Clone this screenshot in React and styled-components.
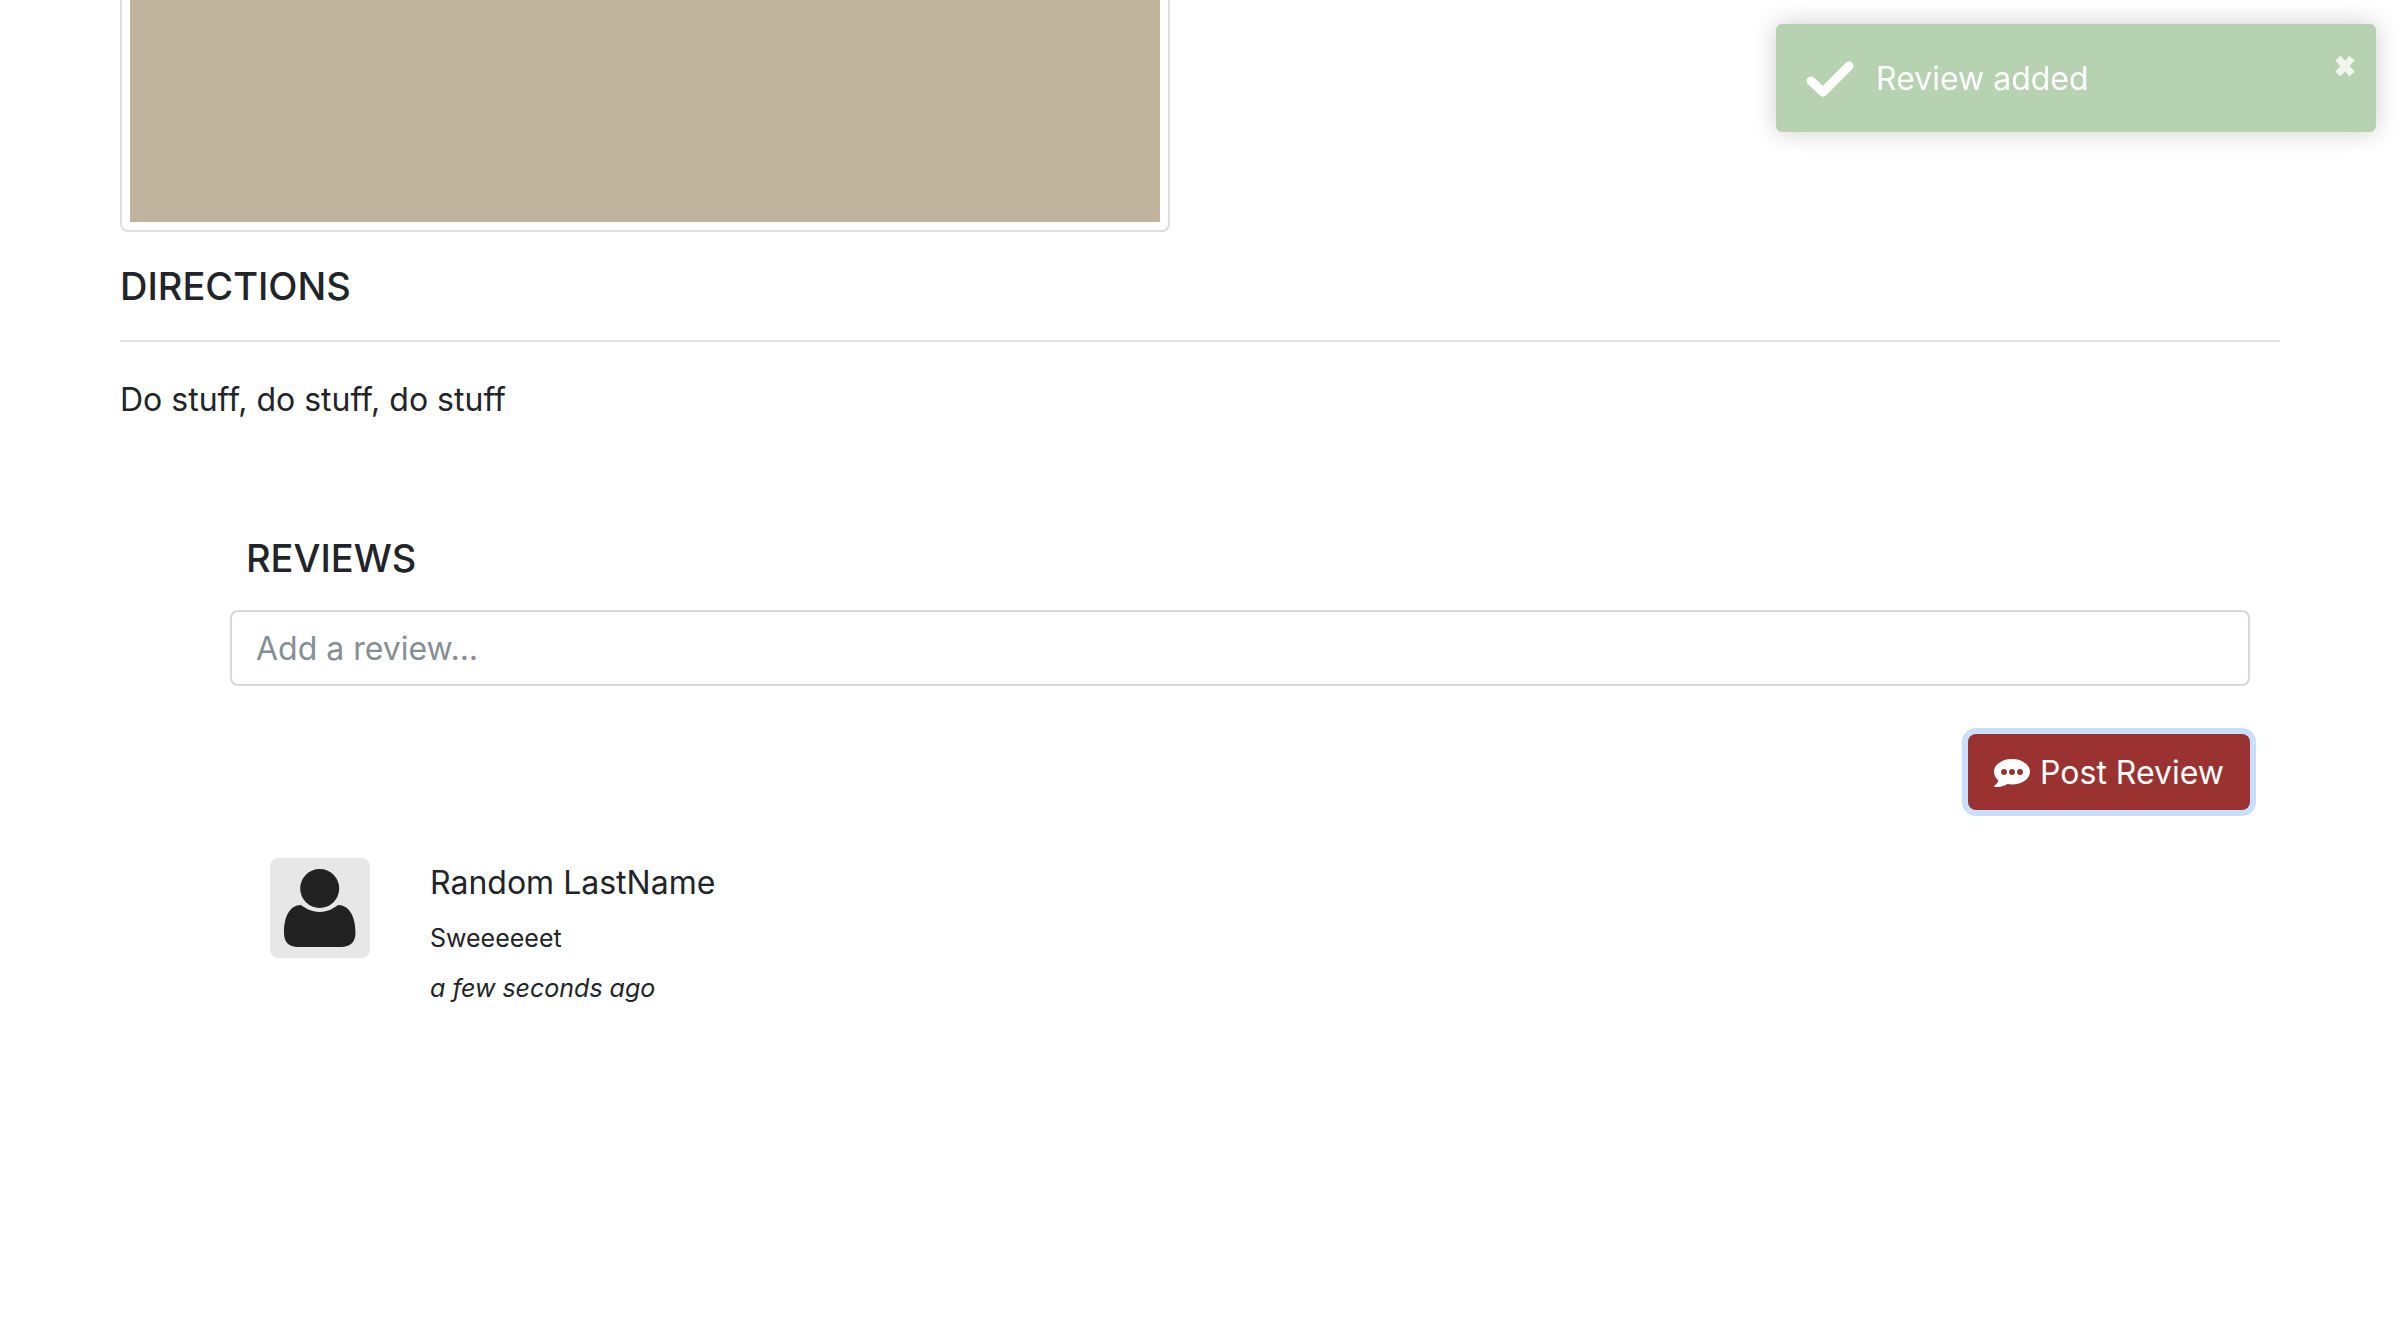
import React, { useState } from "react";
import styled, { createGlobalStyle } from "styled-components";

const GlobalStyle = createGlobalStyle`
  *, *::before, *::after { box-sizing: border-box; }
  body {
    margin: 0;
    background: #fff;
    color: #212529;
    font-family: Inter, "Liberation Sans", sans-serif;
    font-size: 32px;
    line-height: 48px;
  }
`;

const Page = styled.main`
  padding: 0 120px 120px;
`;

const PhotoFrame = styled.div`
  width: calc(50% - 30px);
  padding: 0 8px 8px;
  border: 2px solid #dddddd;
  border-top: 0;
  border-radius: 0 0 8px 8px;
  background: #fff;
`;

const Photo = styled.div`
  height: 222px;
  background: #c0b39c;
`;

const Heading = styled.h2`
  margin: 0;
  font-size: 38px;
  line-height: 48px;
  font-weight: 500;
`;

const Directions = styled.section`
  padding-top: 30px;
`;

const Divider = styled.hr`
  margin: 30px 0 34px;
  border: 0;
  border-top: 2px solid #e3e3e3;
`;

const Text = styled.p`
  margin: 0;
`;

const Reviews = styled.section`
  padding: 110px 30px 0 110px;
`;

const ReviewsTitle = styled(Heading)`
  padding-left: 16px;
`;

const ReviewForm = styled.form`
  display: flex;
  flex-direction: column;
  align-items: flex-end;
  gap: 48px;
  margin-top: 28px;
`;

const ReviewInput = styled.input`
  width: 100%;
  padding: 13px 24px 11px;
  border: 2px solid #d8d8d8;
  border-radius: 8px;
  background: #fff;
  color: inherit;
  font: inherit;
  outline: none;
  &::placeholder { color: #868e96; opacity: 1; }
`;

const PostButton = styled.button`
  display: flex;
  align-items: center;
  gap: 10px;
  padding: 15px 26px 13px;
  border: 0;
  border-radius: 8px;
  background: #993230;
  box-shadow: 0 0 0 6px #c8dfff;
  color: #fff;
  font: inherit;
  cursor: pointer;
`;

const ReviewList = styled.ul`
  display: grid;
  gap: 48px;
  margin: 48px 0 0;
  padding: 0 40px;
  list-style: none;
`;

const Review = styled.li`
  display: flex;
  align-items: flex-start;
  gap: 60px;
`;

const Avatar = styled.svg`
  flex: none;
  width: 100px;
  height: 100px;
  border-radius: 8px;
  background: #e7e7e7;
`;

const ReviewBody = styled.div`
  display: grid;
  gap: 12px;
  padding-top: 1px;
`;

const Small = styled.p`
  margin: 0;
  font-size: 25px;
  line-height: 38px;
  font-style: ${(p) => (p.$italic ? "italic" : "normal")};
`;

const Toast = styled.div`
  position: fixed;
  top: 24px;
  right: 24px;
  display: flex;
  align-items: center;
  gap: 22px;
  width: 600px;
  padding: 31px 30px 29px;
  border-radius: 6px;
  background: #b7d2b0;
  box-shadow: 0 0 24px rgba(0, 0, 0, 0.2);
  color: #fff;
`;

const CloseButton = styled.button`
  position: absolute;
  top: 30px;
  right: 20px;
  display: flex;
  padding: 0;
  border: 0;
  background: none;
  cursor: pointer;
`;

const reviews = [{ author: "Random LastName", text: "Sweeeeeet", when: "a few seconds ago" }];

export default function App() {
  const [toast, setToast] = useState(true);
  return (
    <>
      <GlobalStyle />
      <Page>
        <PhotoFrame><Photo /></PhotoFrame>
        <Directions>
          <Heading>DIRECTIONS</Heading>
          <Divider />
          <Text>Do stuff, do stuff, do stuff</Text>
        </Directions>
        <Reviews>
          <ReviewsTitle>REVIEWS</ReviewsTitle>
          <ReviewForm onSubmit={(e) => e.preventDefault()}>
            <ReviewInput type="text" aria-label="Add a review" placeholder="Add a review..." />
            <PostButton type="submit">
              <svg width="36" height="28" viewBox="0 0 36 28" aria-hidden="true">
                <path fill="#fff" d="M18 0C27.9 0 36 5.700 36 12.800S27.900 25.600 18 25.600c-1.600 0-3.200-.2-4.600-.5C10 27.300 5.500 28.200.8 28c-.8-.1-1-.7-.4-1.200 2.100-1.500 3.500-3.300 3.900-5.300C1.600 19.200 0 16.200 0 12.800 0 5.700 8.100 0 18 0Z" />
                <g fill="#993230"><circle cx="10" cy="13" r="3" /><circle cx="18" cy="13" r="3" /><circle cx="26" cy="13" r="3" /></g>
              </svg>
              Post Review
            </PostButton>
          </ReviewForm>
          <ReviewList>
            {reviews.map((r) => (
              <Review key={r.author}>
                <Avatar viewBox="0 0 100 100" role="img" aria-label={r.author}>
                  <g fill="#222">
                    <circle cx="49.700" cy="30.500" r="19.500" />
                    <path d="M31 47C20 47 14 58 14 75C14 84 19 89 28 89H71C80 89 85.500 84 85.500 75C85.500 58 79 47 68 47C64 50 58 54 49.700 54S35 50 31 47Z" />
                  </g>
                </Avatar>
                <ReviewBody>
                  <Text>{r.author}</Text>
                  <Small>{r.text}</Small>
                  <Small $italic>{r.when}</Small>
                </ReviewBody>
              </Review>
            ))}
          </ReviewList>
        </Reviews>
      </Page>
      {toast && (
        <Toast role="status">
          <svg width="48" height="36" viewBox="0 0 48 36" aria-hidden="true">
            <path d="M5 20L17 31L43 5" fill="none" stroke="#fff" strokeWidth="9" strokeLinecap="round" strokeLinejoin="round" />
          </svg>
          <Text>Review added</Text>
          <CloseButton type="button" aria-label="Close" onClick={() => setToast(false)}>
            <svg width="22" height="24" viewBox="0 0 22 24"><path d="M4 4L18 20M18 4L4 20" stroke="#f0f5ef" strokeWidth="7" /></svg>
          </CloseButton>
        </Toast>
      )}
    </>
  );
}
